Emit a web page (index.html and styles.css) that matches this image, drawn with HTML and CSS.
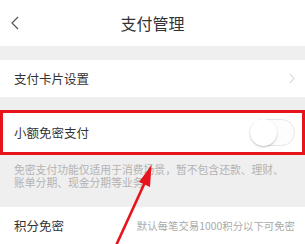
FILE: index.html
```html
<!DOCTYPE html>
<html lang="zh-CN">
<head>
<meta charset="utf-8">
<title>支付管理</title>
<link rel="stylesheet" href="styles.css">
</head>
<body>
<div class="page">
  <header class="header">
    <svg class="back" width="10" height="14" viewBox="0 0 10 14"><path d="M8 1 L2 7 L8 13" fill="none" stroke="#555" stroke-width="1.2"/></svg>
    <h1 class="title">支付管理</h1>
  </header>
  <div class="gap gap-a"></div>
  <div class="row row-short">
    <span class="label">支付卡片设置</span>
    <svg class="chev" width="6" height="11" viewBox="0 0 6 11"><path d="M1 1 L5 5.5 L1 10" fill="none" stroke="#c8c8c8" stroke-width="1"/></svg>
  </div>
  <div class="gap gap-b"></div>
  <div class="highlight">
    <div class="row row-mid">
      <span class="label">小额免密支付</span>
      <span class="toggle"><span class="knob"></span></span>
    </div>
  </div>
  <div class="desc">
    <div class="desc-line">免密支付功能仅适用于消费场景，暂不包含还款、理财、</div>
    <div class="desc-line">账单分期、现金分期等业务</div>
  </div>
  <div class="row row-short">
    <span class="label">积分免密</span>
    <span class="note">默认每笔交易1000积分以下可免密</span>
  </div>
  <svg class="arrow" width="305" height="244" viewBox="0 0 305 244">
    <line x1="114" y1="250" x2="146" y2="180" stroke="#e8141c" stroke-width="2.6"/>
    <polygon points="151.5,165 139,182 150,187" fill="#e8141c"/>
  </svg>
</div>
</body>
</html>
```
FILE: styles.css
```css
html, body {
  margin: 0;
  padding: 0;
  background: #ffffff;
}
body {
  font-family: "Noto Sans CJK SC", "Noto Sans", sans-serif;
  color: #333333;
}
.page {
  position: relative;
  width: 305px;
  height: 244px;
  overflow: hidden;
  background: #efefef;
}
.header {
  height: 46px;
  background: #ffffff;
  display: flex;
  align-items: center;
  justify-content: center;
  position: relative;
}
.back {
  position: absolute;
  left: 10px;
  top: 16px;
}
.title {
  margin: 0;
  font-size: 16px;
  font-weight: normal;
  color: #333333;
  line-height: 20px;
}
.gap-a { height: 14px; }
.gap-b { height: 13px; }
.row {
  background: #ffffff;
  display: flex;
  align-items: center;
  justify-content: space-between;
  padding: 0 10px 0 14px;
}
.row-short { height: 37px; }
.row-mid { height: 39px; }
.label {
  font-size: 12.5px;
  color: #333333;
}
.highlight {
  border: 3px solid #e8141c;
  height: 39px;
}
.highlight .row {
  padding-left: 11px;
  padding-right: 7px;
}
.toggle {
  width: 45px;
  height: 27px;
  border: 1px solid #e6e6e6;
  border-radius: 15px;
  box-sizing: border-box;
  position: relative;
  background: #fdfdfd;
}
.knob {
  position: absolute;
  left: -1px;
  top: -1px;
  width: 27px;
  height: 27px;
  border-radius: 50%;
  background: #ffffff;
  box-shadow: 0 1px 2px rgba(0,0,0,0.25);
}
.desc {
  font-size: 10.8px;
  color: #b3b3b3;
  padding: 8px 14px 18px 14px;
  height: 26px;
  display: flex;
  flex-direction: column;
}
.desc-line {
  height: 13px;
  line-height: 13px;
  white-space: nowrap;
}
.note {
  font-size: 10.4px;
  color: #aaaaaa;
}
.arrow {
  position: absolute;
  left: 0;
  top: 0;
  pointer-events: none;
}
```
